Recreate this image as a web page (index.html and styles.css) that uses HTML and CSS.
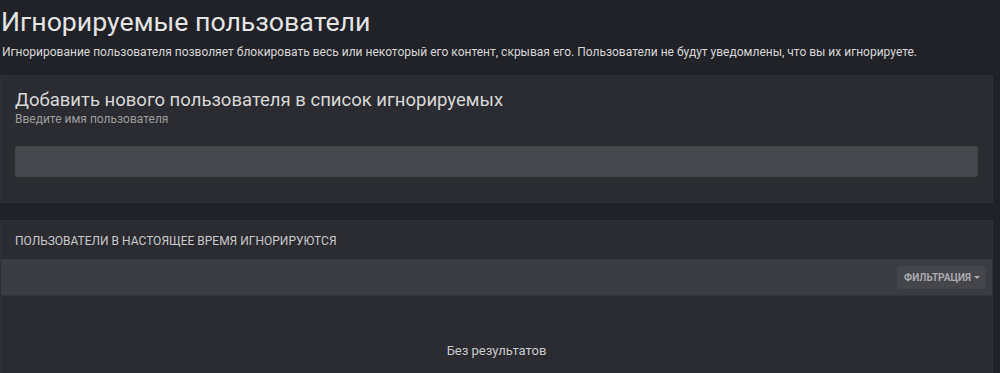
FILE: index.html
```html
<!DOCTYPE html>
<html lang="ru">
<head>
    <meta charset="UTF-8">
    <title>Игнорируемые пользователи</title>
    <link rel="stylesheet" href="styles.css">
</head>
<body>
    <div class="page">
        <h1 class="page-title">Игнорируемые пользователи</h1>
        <p class="page-desc">Игнорирование пользователя позволяет блокировать весь или некоторый его контент, скрывая его. Пользователи не будут уведомлены, что вы их игнорируете.</p>

        <!-- добавление -->
        <div class="block add-block">
            <h2 class="add-title">Добавить нового пользователя в список игнорируемых</h2>
            <div class="add-hint">Введите имя пользователя</div>
            <input type="text" class="add-input">
        </div>

        <!-- список -->
        <div class="block list-block">
            <div class="list-header">Пользователи в настоящее время игнорируются</div>
            <div class="filter-bar">
                <span class="filter-button">Фильтрация <span class="caret"></span></span>
            </div>
            <div class="list-empty">Без результатов</div>
        </div>
    </div>
</body>
</html>
```

FILE: styles.css
```css
body {
    margin: 0;
    background-color: #212227;
    font-family: Roboto, "Noto Sans", sans-serif;
    color: #dcdcdc;
}

.page {
    padding: 0 7px 0 0;
}

.page-title {
    margin: 0;
    padding: 5px 0 0 1px;
    font-size: 26.7px;
    font-weight: 400;
    line-height: 34px;
    color: #e4e4e4;
}

.page-desc {
    margin: 0;
    padding: 0 0 0 2px;
    font-size: 12px;
    line-height: 26px;
    color: #d6d6d6;
}

.block {
    background-color: #2b2c31;
    border: 1px solid #2f3035;
    box-sizing: border-box;
}

.add-block {
    margin-top: 10px;
    padding: 12px 14px 26px 14px;
    height: 128px;
}

.add-title {
    margin: 0;
    font-size: 18.5px;
    font-weight: 400;
    line-height: 24px;
    color: #d8d8d8;
}

.add-hint {
    font-size: 12px;
    line-height: 14px;
    color: #9c9c9e;
}

.add-input {
    display: block;
    width: 100%;
    height: 31px;
    margin-top: 20px;
    box-sizing: border-box;
    border: 1px solid #424347;
    border-radius: 2px;
    background-color: #46474c;
    outline: none;
}

.list-block {
    margin-top: 17px;
    border-bottom: none;
    height: 160px;
}

.list-header {
    height: 38px;
    padding-left: 14px;
    font-size: 12px;
    line-height: 40px;
    text-transform: uppercase;
    color: #c8c8ca;
}

.filter-bar {
    display: flex;
    justify-content: flex-end;
    align-items: center;
    height: 37px;
    padding-right: 6px;
    background-color: #3b3d45;
    border-top: 1px solid #34363c;
    border-bottom: 1px solid #34363c;
    box-sizing: border-box;
}

.filter-button {
    display: flex;
    align-items: center;
    gap: 3px;
    height: 23px;
    padding: 0 6px 0 7px;
    background-color: #45464b;
    border-radius: 2px;
    font-size: 10px;
    font-weight: 700;
    text-transform: uppercase;
    color: #a9a9ab;
}

.caret {
    width: 0;
    height: 0;
    border-left: 3px solid transparent;
    border-right: 3px solid transparent;
    border-top: 3px solid #a9a9ab;
}

.list-empty {
    padding-top: 47px;
    text-align: center;
    font-size: 13px;
    color: #c8c8ca;
}
```
